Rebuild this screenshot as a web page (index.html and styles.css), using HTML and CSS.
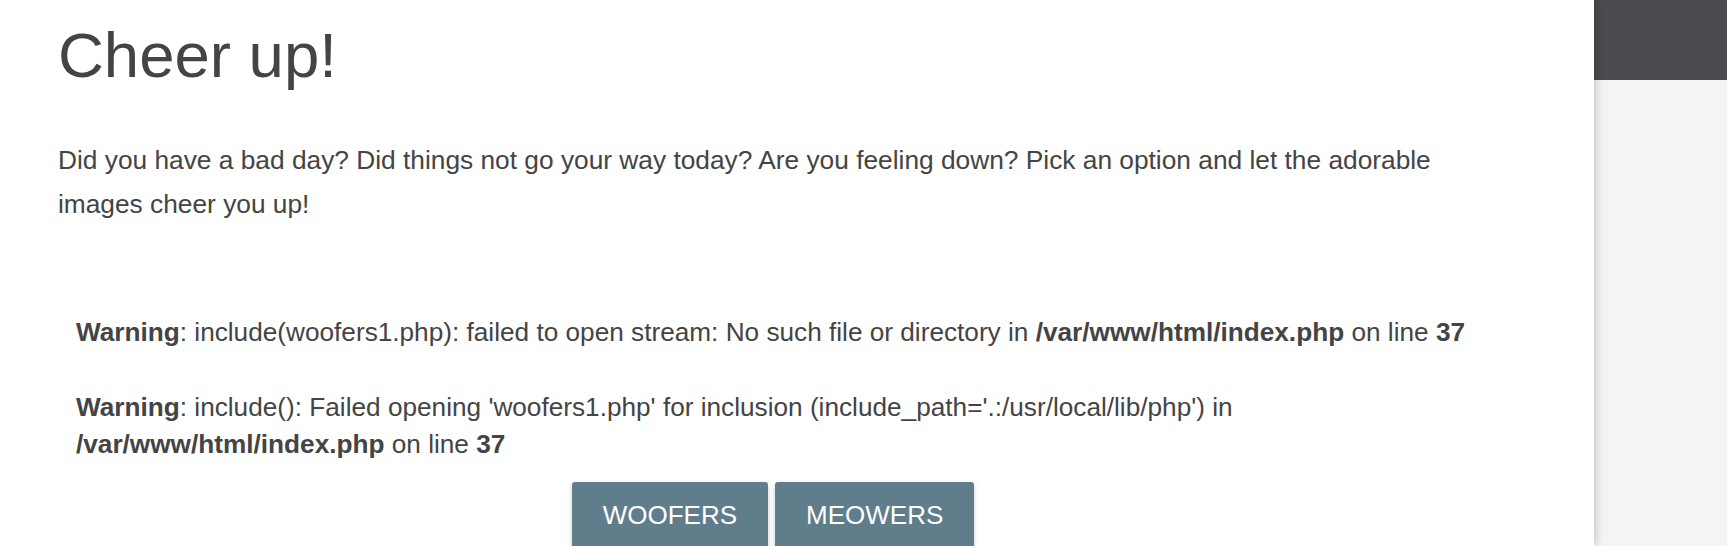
FILE: index.html
```html
<!DOCTYPE html>
<html lang="en">
<head>
<meta charset="utf-8">
<title>Cheer up!</title>
<link rel="stylesheet" href="styles.css">
</head>
<body>
<div class="layout">
  <main class="main">
    <div class="content">
      <h1 class="title">Cheer up!</h1>
      <p class="intro">Did you have a bad day? Did things not go your way today? Are you feeling down? Pick an option and let the adorable images cheer you up!</p>
      <div class="warnings"><b>Warning</b>:  include(woofers1.php): failed to open stream: No such file or directory in <b>/var/www/html/index.php</b> on line <b>37</b><br><br><b>Warning</b>:  include(): Failed opening 'woofers1.php' for inclusion (include_path='.:/usr/local/lib/php') in <b>/var/www/html/index.php</b> on line <b>37</b></div>
      <div class="actions">
        <button class="btn" type="button">Woofers</button>
        <button class="btn" type="button">Meowers</button>
      </div>
    </div>
  </main>
  <aside class="side">
    <div class="side-top"></div>
  </aside>
</div>
</body>
</html>
```
FILE: styles.css
```css
html, body {
  margin: 0;
  padding: 0;
  height: 100%;
  overflow: hidden;
}
body {
  font-family: "Liberation Sans", Arial, Helvetica, sans-serif;
  color: #444;
  background: #f4f4f4;
}
.layout {
  display: flex;
  height: 546px;
}
.main {
  flex: 1;
  background: #fff;
  box-shadow: 0 0 10px rgba(0, 0, 0, 0.28);
  position: relative;
  z-index: 1;
}
.content {
  width: 1430px;
  padding-left: 58px;
}
.title {
  margin: 18.5px 0 0;
  font-size: 63.5px;
  font-weight: normal;
  line-height: normal;
  color: #444;
}
.intro {
  margin: 47px 0 0;
  font-size: 26.3px;
  line-height: 44px;
}
.warnings {
  margin-top: 88px;
  padding: 0 18px;
  font-size: 26.2px;
  line-height: 37.5px;
}
.actions {
  display: flex;
  justify-content: center;
  gap: 7px;
  margin-top: 18.5px;
}
.btn {
  font-family: "Liberation Sans", Arial, Helvetica, sans-serif;
  font-size: 26px;
  line-height: normal;
  text-transform: uppercase;
  color: #fff;
  background: #607d8b;
  border: 0;
  border-radius: 3px;
  padding: 18px 31px;
  box-shadow: 0 2px 5px rgba(0, 0, 0, 0.2);
}
.side {
  width: 133px;
  background: #f4f4f4;
}
.side-top {
  height: 80px;
  background: #4a4b50;
}
```
